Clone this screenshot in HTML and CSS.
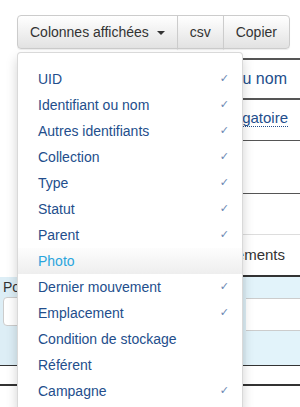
FILE: index.html
```html
<!DOCTYPE html>
<html lang="fr">
<head>
	<meta charset="utf-8">
	<title>Liste des objets</title>
	<link rel="stylesheet" href="styles.css">
</head>
<body>
<div class="toolbar">
	<div class="btn-group">
		<div class="dropdown">
			<button class="btn">Colonnes affichées <span class="caret"></span></button>
			<ul class="dropdown-menu">
				<li><a>UID <span class="check">✓</span></a></li>
				<li><a>Identifiant ou nom <span class="check">✓</span></a></li>
				<li><a>Autres identifiants <span class="check">✓</span></a></li>
				<li><a>Collection <span class="check">✓</span></a></li>
				<li><a>Type <span class="check">✓</span></a></li>
				<li><a>Statut <span class="check">✓</span></a></li>
				<li><a>Parent <span class="check">✓</span></a></li>
				<li class="hover"><a>Photo</a></li>
				<li><a>Dernier mouvement <span class="check">✓</span></a></li>
				<li><a>Emplacement <span class="check">✓</span></a></li>
				<li><a>Condition de stockage</a></li>
				<li><a>Référent</a></li>
				<li><a>Campagne <span class="check">✓</span></a></li>
			</ul>
		</div>
		<button class="btn">csv</button>
		<button class="btn">Copier</button>
	</div>
</div>

<div class="table">
	<div class="row head">Identifiant ou nom</div>
	<div class="row sub"><span class="abbr">Obligatoire</span></div>
	<div class="row empty dark"></div>
	<div class="row empty light"></div>
	<div class="row label">Mouvements</div>
	<div class="row info">
		<div class="info-left">
			<div class="info-label">Position</div>
			<input class="info-input" type="text">
		</div>
		<div class="info-right">
			<div class="band blue"></div>
			<div class="band white"></div>
			<div class="band blue"></div>
		</div>
	</div>
	<div class="row thin"></div>
</div>
</body>
</html>
```

FILE: styles.css
```css
html,
body {
	height: 407px;
}

body {
	margin: 0;
	font-size: 14px;
	line-height: 20px;
	font-family: "Liberation Sans", Arial, sans-serif;
	color: #333;
	background: #fff;
	overflow: hidden;
}

.toolbar {
	padding: 15px 0 0 17px;
}

.btn-group {
	display: flex;
}

.dropdown {
	position: relative;
}

.btn {
	font: inherit;
	color: #333;
	height: 34px;
	padding: 6px 12px;
	border: 1px solid #ccc;
	margin-left: -1px;
	background: linear-gradient(#fff, #e2e2e2);
	box-shadow: inset 0 1px 0 rgba(255, 255, 255, .15), 0 1px 1px rgba(0, 0, 0, .075);
}

.dropdown .btn {
	margin-left: 0;
	border-radius: 4px 0 0 4px;
}

.btn-group > .btn:last-child {
	border-radius: 0 4px 4px 0;
}

.caret {
	display: inline-block;
	width: 0;
	height: 0;
	margin-left: 4px;
	vertical-align: middle;
	border-top: 4px solid #333;
	border-left: 4px solid transparent;
	border-right: 4px solid transparent;
}

.dropdown-menu {
	position: absolute;
	top: 37px;
	left: 0;
	z-index: 10;
	width: 224px;
	margin: 0;
	padding: 13px 0 5px;
	list-style: none;
	background: #fff;
	border: 1px solid rgba(0, 0, 0, .15);
	border-radius: 4px;
	box-shadow: 0 6px 12px rgba(0, 0, 0, .175);
}

.dropdown-menu a {
	display: flex;
	justify-content: space-between;
	padding: 3px 13px 3px 20px;
	color: #234e8c;
	white-space: nowrap;
}

.dropdown-menu .hover a {
	color: #2ba5dd;
	background: linear-gradient(#fdfdfd, #eeeeee);
}

.check {
	font-family: "DejaVu Sans", sans-serif;
	font-size: 11px;
	color: #6a87b2;
}

/* table under the menu */
.table {
	margin-top: 9px;
}

.row {
	box-sizing: border-box;
}

.head {
	margin-left: 20px;
	height: 42px;
	padding: 9px 13px 0 0;
	text-align: right;
	border-top: 2px solid #555;
	border-bottom: 2px solid #555;
	color: #234e8c;
	font-size: 16px;
}

.sub {
	margin-left: 20px;
	height: 41px;
	padding: 8px 12px 0 0;
	text-align: right;
	border-bottom: 1px solid #555;
	font-size: 15px;
}

.abbr {
	color: #234e8c;
	border-bottom: 1px dotted #234e8c;
}

.empty {
	margin-left: 20px;
	height: 53px;
}

.empty.dark {
	border-bottom: 1px solid #555;
}

.empty.light {
	height: 41px;
	border-bottom: 1px solid #ddd;
}

.label {
	margin-left: 20px;
	height: 42px;
	padding: 10px 15px 0 0;
	text-align: right;
	border-bottom: 2px solid #333;
	font-size: 15px;
}

.info {
	display: flex;
	height: 89px;
	border-bottom: 1px solid #333;
}

.info-left {
	width: 243px;
	padding: 0 0 0 3px;
	background: #ddeef6;
}

.info-label {
	height: 20px;
}

.info-input {
	display: block;
	box-sizing: border-box;
	width: 230px;
	height: 29px;
	border: 1px solid #ccc;
	border-radius: 4px;
	background: #fff;
}

.info-right {
	flex: 1;
	display: flex;
	flex-direction: column;
}

.band.blue {
	height: 21px;
	background: #e2f3fa;
	border-bottom: 1px solid #ccc;
}

.band.white {
	height: 31px;
	background: #fff;
	border-bottom: 1px solid #ccc;
}

.band.blue:last-child {
	flex: 1;
	border-bottom: none;
}

.thin {
	height: 20px;
	border-bottom: 2px solid #333;
}
```
